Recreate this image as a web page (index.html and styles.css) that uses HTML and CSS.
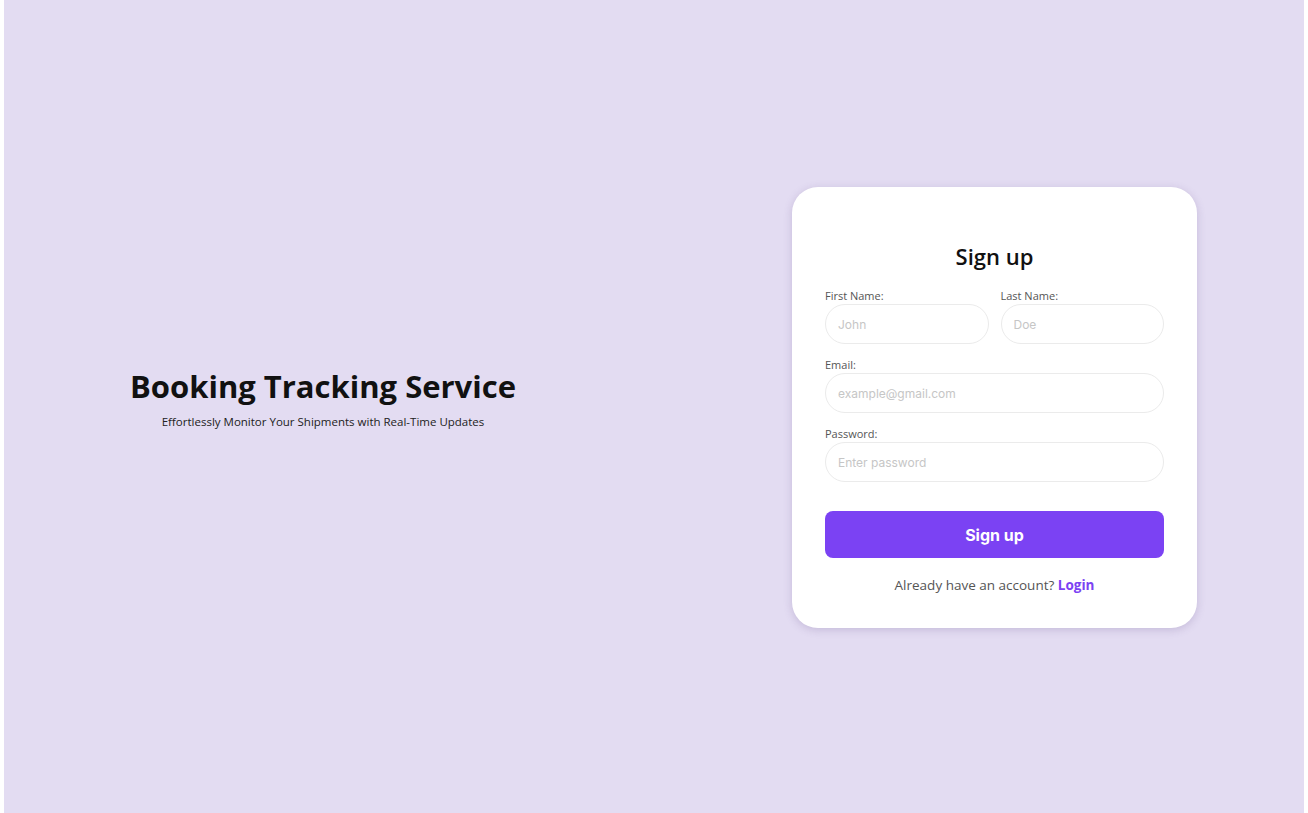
FILE: index.html
```html
<!DOCTYPE html>
<html lang="en">
<head>
<meta charset="utf-8">
<title>Booking Tracking Service - Sign up</title>
<link rel="stylesheet" href="styles.css">
</head>
<body>
<main class="page">
  <section class="hero">
    <h1 class="hero-title">Booking Tracking Service</h1>
    <p class="hero-sub">Effortlessly Monitor Your Shipments with Real-Time Updates</p>
  </section>
  <form class="card">
    <h2 class="card-title">Sign up</h2>
    <div class="row">
      <div class="field">
        <label class="label">First Name:</label>
        <input class="input" type="text" placeholder="John">
      </div>
      <div class="field">
        <label class="label">Last Name:</label>
        <input class="input" type="text" placeholder="Doe">
      </div>
    </div>
    <div class="field">
      <label class="label">Email:</label>
      <input class="input" type="email" placeholder="example@gmail.com">
    </div>
    <div class="field">
      <label class="label">Password:</label>
      <input class="input" type="password" placeholder="Enter password">
    </div>
    <button class="btn" type="button">Sign up</button>
    <p class="foot">Already have an account? <a class="link" href="#">Login</a></p>
  </form>
</main>
</body>
</html>
```

FILE: styles.css
```css
html, body {
  margin: 0;
  padding: 0;
  background: #ffffff;
}
body {
  padding: 0 4px;
  font-family: "Open Sans", "Noto Sans", sans-serif;
}
.page {
  background: #e3dcf2;
  height: 813px;
  box-sizing: border-box;
  padding-top: 2px;
  display: flex;
  align-items: center;
}
.hero {
  width: 638px;
  text-align: center;
  margin-top: -20px;
}
.hero-title {
  margin: 0;
  font-size: 31px;
  font-weight: 700;
  color: #111111;
  line-height: 40px;
}
.hero-sub {
  margin: 8px 0 0;
  font-size: 11.5px;
  color: #222222;
}
.card {
  margin-left: 150px;
  width: 339px;
  background: #ffffff;
  border-radius: 26px;
  padding: 54px 33px 33px;
  box-shadow: 0 2px 8px rgba(90, 70, 130, 0.22);
  display: flex;
  flex-direction: column;
}
.card-title {
  margin: 0 0 17px;
  text-align: center;
  font-size: 22px;
  font-weight: 600;
  line-height: 30px;
  color: #111111;
}
.row {
  display: flex;
  gap: 12px;
}
.row .field { flex: 1; min-width: 0; }
.field {
  display: flex;
  flex-direction: column;
  margin-bottom: 13px;
}
.label {
  font-size: 11px;
  line-height: 16px;
  color: #555555;
}
.input {
  height: 40px;
  box-sizing: border-box;
  border: 1px solid #ebebeb;
  border-radius: 20px;
  padding: 0 12px;
  font-family: "Inter", sans-serif;
  font-size: 12px;
  outline: none;
  width: 100%;
}
.input::placeholder { color: #c6c6c6; }
.btn {
  margin-top: 16px;
  height: 47px;
  border: none;
  border-radius: 8px;
  background: #7b42f3;
  color: #ffffff;
  font-family: "Inter", sans-serif;
  font-size: 16px;
  font-weight: 700;
}
.foot {
  margin: 17px 0 0;
  text-align: center;
  font-size: 13.5px;
  line-height: 20px;
  color: #555555;
}
.link {
  color: #7b42f3;
  font-weight: 700;
  text-decoration: none;
}
```
